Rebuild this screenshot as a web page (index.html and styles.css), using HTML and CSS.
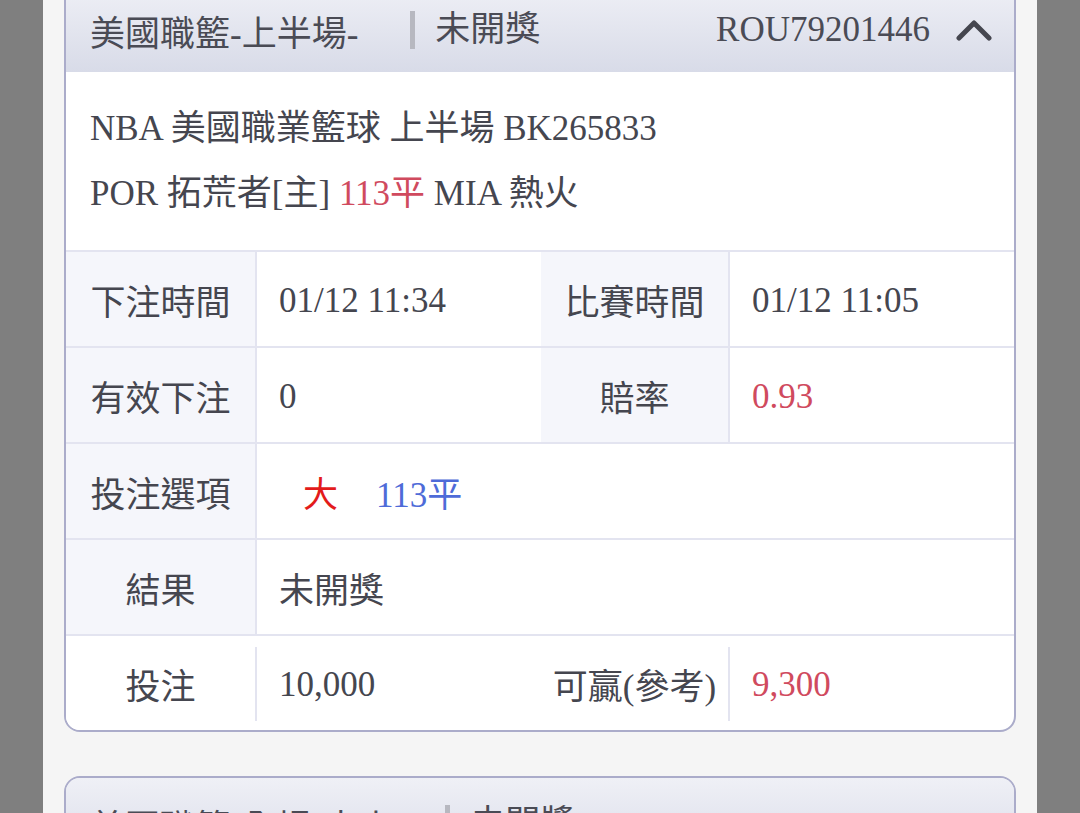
FILE: index.html
```html
<!DOCTYPE html>
<html lang="zh-Hant">
<head>
<meta charset="utf-8">
<title>注單明細</title>
<link rel="stylesheet" href="styles.css">
</head>
<body>
<div class="modal">
  <div class="card first">
    <div class="card-head">
      <span class="title">美國職籃-上半場-</span>
      <span class="status">未開獎</span>
      <span class="order">ROU79201446</span>
      <svg class="chev" width="36" height="22" viewBox="0 0 36 22"><path d="M3 19 L18 4 L33 19" fill="none" stroke="#45464f" stroke-width="5" stroke-linecap="round" stroke-linejoin="round"/></svg>
    </div>
    <div class="info">
      <p>NBA 美國職業籃球 上半場 BK265833</p>
      <p>POR 拓荒者[主] <span class="red">113平</span> MIA 熱火</p>
    </div>
    <div class="table">
      <div class="row">
        <div class="lbl">下注時間</div>
        <div class="val">01/12 11:34</div>
        <div class="lbl">比賽時間</div>
        <div class="val">01/12 11:05</div>
      </div>
      <div class="row">
        <div class="lbl">有效下注</div>
        <div class="val">0</div>
        <div class="lbl">賠率</div>
        <div class="val red">0.93</div>
      </div>
      <div class="row">
        <div class="lbl">投注選項</div>
        <div class="val wide"><span class="side">大</span><span class="blue">113平</span></div>
      </div>
      <div class="row">
        <div class="lbl">結果</div>
        <div class="val wide">未開獎</div>
      </div>
      <div class="row foot">
        <div class="lbl">投注</div>
        <div class="val">10,000</div>
        <div class="lbl">可贏(參考)</div>
        <div class="val red">9,300</div>
      </div>
    </div>
  </div>
  <div class="card">
    <div class="card-head">
      <span class="title">美國職籃-全場-大小</span>
      <span class="status">未開獎</span>
    </div>
  </div>
</div>
</body>
</html>
```

FILE: styles.css
```css
html, body {
  margin: 0;
  padding: 0;
}
body {
  background: #7f7f7f;
  font-family: "Liberation Serif", "Noto Sans CJK TC", serif;
  color: #45464f;
  overflow: hidden;
}
.modal {
  margin: 0 43px;
  height: 813px;
  background: #f5f5f5;
  padding: 0 21px;
  overflow: hidden;
}
.card {
  border: 2px solid #abacca;
  border-radius: 16px;
  background: #fff;
  overflow: hidden;
  margin-top: 44px;
}
.card.first {
  margin-top: -18px;
}
.card-head {
  height: 88px;
  display: flex;
  align-items: center;
  padding: 4px 22px 0 24px;
  box-sizing: border-box;
  background: linear-gradient(#eff0f6, #d8dbe8);
  font-size: 35px;
  color: #4a4b55;
}
.status {
  margin-left: 52px;
  padding-left: 20px;
  border-left: 5px solid #b7b8c0;
  line-height: 38px;
}
.order {
  margin-left: auto;
}
.chev {
  margin-left: 26px;
  display: block;
}
.info {
  padding: 24px 24px 24px;
  font-size: 35px;
}
.info p {
  margin: 0;
  line-height: 65px;
}
.red {
  color: #d04a5e;
}
.blue {
  color: #4e6bd8;
}
.side {
  color: #e31b1b;
  margin-left: 24px;
  margin-right: 38px;
}
.row {
  display: grid;
  grid-template-columns: 189px 1fr 187px 1fr;
  height: 96px;
  box-sizing: border-box;
  border-top: 2px solid #e3e4f0;
  font-size: 35px;
}
.lbl {
  background: #f5f6fb;
  display: flex;
  align-items: center;
  justify-content: center;
  color: #45464f;
}
.val {
  display: flex;
  align-items: center;
  padding-left: 22px;
  padding-top: 4px;
  border-left: 2px solid #e3e4f0;
}
.val.wide {
  grid-column: 2 / 5;
  padding-top: 0;
}
.foot .lbl {
  background: #fff;
}
.foot .val {
  border-left: 2px solid transparent;
  background-image: linear-gradient(#e3e4f0, #e3e4f0);
  background-repeat: no-repeat;
  background-origin: border-box;
  background-size: 2px 74px;
  background-position: 0 11px;
}
```
